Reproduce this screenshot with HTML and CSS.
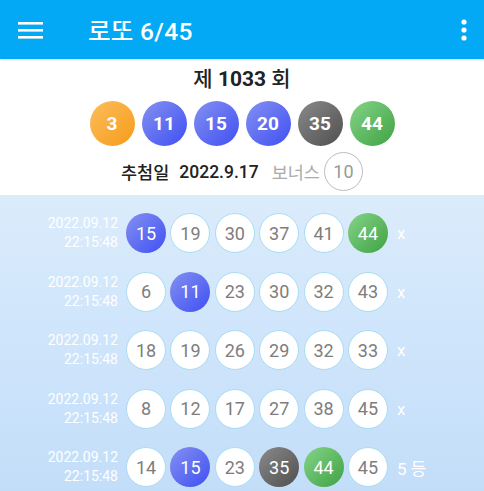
FILE: index.html
```html
<!DOCTYPE html>
<html lang="ko">
<head>
  <meta charset="UTF-8">
  <meta name="viewport" content="width=device-width, initial-scale=1.0">
  <title>로또 6/45</title>
  <link rel="stylesheet" href="styles.css">
</head>
<body>
  <div class="app">
    <header class="bar">
      <svg class="menu" width="25" height="18" viewBox="0 0 25 18">
        <rect x="0" y="1" width="25" height="2.6" fill="#fff"/>
        <rect x="0" y="8" width="25" height="2.6" fill="#fff"/>
        <rect x="0" y="15" width="25" height="2.6" fill="#fff"/>
      </svg>
      <div class="title">로또 6/45</div>
      <svg class="more" width="6" height="22" viewBox="0 0 6 22">
        <circle cx="3" cy="3" r="2.6" fill="#fff"/>
        <circle cx="3" cy="11" r="2.6" fill="#fff"/>
        <circle cx="3" cy="19" r="2.6" fill="#fff"/>
      </svg>
    </header>

    <section class="draw">
      <div class="round">제 <b>1033</b> 회</div>
      <div class="win">
        <span class="ball big c-yellow">3</span>
        <span class="ball big c-blue">11</span>
        <span class="ball big c-blue">15</span>
        <span class="ball big c-blue">20</span>
        <span class="ball big c-gray">35</span>
        <span class="ball big c-green">44</span>
      </div>
      <div class="info">
        <span class="date-label">추첨일</span>
        <span class="date">2022.9.17</span>
        <span class="bonus-label">보너스</span>
        <span class="bonus">10</span>
      </div>
    </section>

    <section class="list" id="list"></section>
  </div>
<script>
var rows=[
  {n:[15,19,30,37,41,44], hit:{15:"c-blue",44:"c-green"}, r:"x"},
  {n:[6,11,23,30,32,43], hit:{11:"c-blue"}, r:"x"},
  {n:[18,19,26,29,32,33], hit:{}, r:"x"},
  {n:[8,12,17,27,38,45], hit:{}, r:"x"},
  {n:[14,15,23,35,44,45], hit:{15:"c-blue",35:"c-gray",44:"c-green"}, r:"5 등"}
]
var list=document.getElementById("list")
rows.forEach(function(row){
  var html='<div class="row"><div class="stamp">2022.09.12<br>22:15:48</div><div class="nums">'
  row.n.forEach(function(n){
    var c=row.hit[n]
    html+='<span class="ball '+(c?c:"plain")+'">'+n+'</span>'
  })
  html+='</div><div class="result">'+row.r+'</div></div>'
  list.innerHTML+=html
})
</script>
</body>
</html>
```

FILE: styles.css
```css
html,body {margin: 0;height: 100%;}
body {font-family: Roboto, "Noto Sans CJK KR", sans-serif;background: #c9e2fa;}

.app {width: 484px;height: 491px;overflow: hidden;display: flex;flex-direction: column;}

/* top bar */
.bar {height: 59px;flex: none;background: #03a9f4;display: flex;align-items: center;padding: 0 17px 0 18px;box-shadow: 0 1px 2px rgba(0,0,0,0.15);position: relative;z-index: 1;}
.bar .menu {display: block;}
.bar .title {color: #fff;font-size: 24.5px;font-weight: 500;margin-left: 45px;flex: 1;letter-spacing: 0.3px;}
.bar .more {display: block;}

/* latest draw */
.draw {background: #fff;flex: none;padding: 8px 0 4px;display: flex;flex-direction: column;align-items: center;}
.round {font-size: 21px;line-height: 24px;color: #222;font-weight: 500;}
.round b {font-weight: 700;}
.win {display: flex;gap: 7px;margin-top: 10px;}
.info {display: flex;align-items: center;margin-top: 6px;font-size: 17.5px;color: #222;}
.info .date-label {font-weight: 500;}
.info .date {margin-left: 10px;font-weight: 500;}
.info .bonus-label {margin-left: 13px;color: #aaa;}
.info .bonus {width: 37px;height: 37px;border: 1.5px solid #bdbdbd;border-radius: 50%;display: flex;align-items: center;justify-content: center;color: #999;font-size: 18px;margin-left: 4px;}

/* balls */
.ball {width: 40px;height: 40px;border-radius: 50%;display: flex;align-items: center;justify-content: center;font-size: 18px;box-sizing: border-box;color: #fff;}
.ball.big {width: 45px;height: 45px;font-weight: 700;font-size: 19px;}
.c-yellow {background: linear-gradient(135deg, #fcbd5c, #f59c1a);}
.c-blue {background: linear-gradient(135deg, #8590f0, #3f50f3);}
.c-gray {background: linear-gradient(135deg, #8a8a8a, #4f4f4f);}
.c-green {background: linear-gradient(135deg, #85d488, #3fa243);}
.plain {background: #fff;border: 1.5px solid #a9dcf2;color: #7d7d7d;}

/* my numbers */
.list {flex: 1;background: linear-gradient(180deg, #dbecfb 0%, #cfe5fb 45%, #c2ddf9 100%);padding-top: 18px;}
.row {display: flex;align-items: center;height: 40px;margin-bottom: 18.5px;}
.stamp {width: 118px;text-align: right;color: #fff;font-size: 14px;line-height: 19px;margin-right: 8px;}
.nums {display: flex;gap: 4.4px;}
.result {color: #fff;font-size: 17px;margin-left: 9px;}
```
